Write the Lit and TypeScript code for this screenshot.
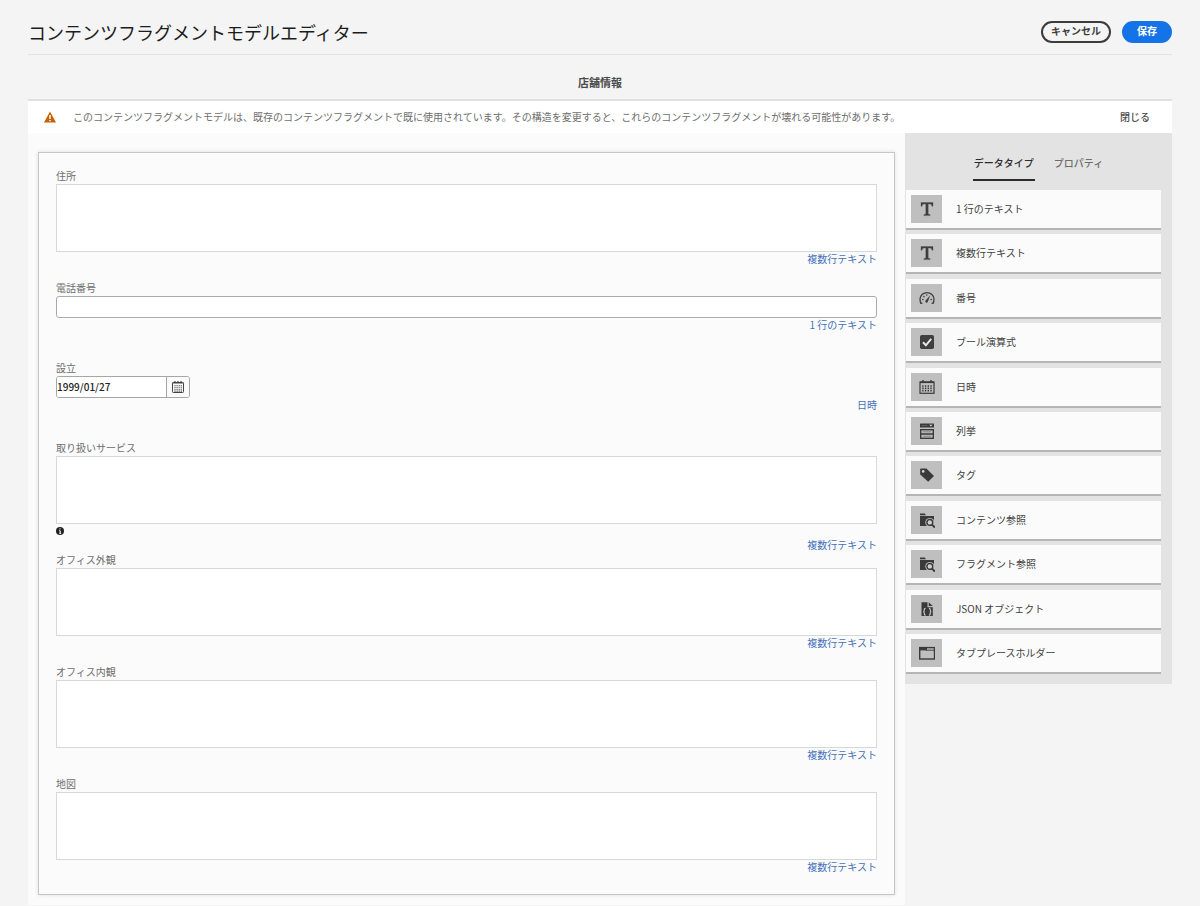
import { LitElement, html, css, svg, nothing } from "lit";
import { customElement, property, state } from "lit/decorators.js";
import { classMap } from "lit/directives/class-map.js";

const folderSearch = svg`
  <path d="M1 1.600h4.800l1.200 1.600H1zM1 4h14v10H1z" fill="#3a3a3a"/>
  <path d="M11 11l5 5" stroke="#bfbfbf" stroke-width="4"/>
  <circle cx="10.800" cy="10.400" r="4.500" fill="#bfbfbf"/>
  <circle cx="10.800" cy="10.400" r="2.900" fill="#cfcfcf" stroke="#3a3a3a" stroke-width="1.400"/>
  <path d="M13 12.600l2.900 2.900" stroke="#3a3a3a" stroke-width="2"/>`;

const letterT = svg`
  <path d="M2 1.500h12v3.700h-1.100c-.1-1.500-.7-2.200-2-2.200H9.200v9.300c0 1 .5 1.200 1.900 1.300v1H4.900v-1c1.400-.1 1.900-.3 1.900-1.300V3H5.100c-1.300 0-1.900.7-2 2.200H2z" fill="#3f3f3f" stroke="#3f3f3f" stroke-width=".3"/>`;

const ICONS: Record<string, unknown> = {
  text: letterT,
  gauge: svg`
    <path d="M2.300 13.600a7 7 0 1 1 11.400 0" fill="none" stroke="#3f3f3f" stroke-width="1.300"/>
    <path d="M1.200 13.300h2.300M12.500 13.300h2.300" stroke="#3f3f3f" stroke-width="1"/>
    <path d="M11.300 5.300L8.900 11.600a1.300 1.300 0 1 1-2.100-1.300z" fill="#3f3f3f"/>
    <g fill="#3f3f3f"><circle cx="3.800" cy="9.500" r=".8"/><circle cx="4.900" cy="6.600" r=".8"/><circle cx="7.800" cy="5" r=".8"/><circle cx="12.200" cy="9.500" r=".8"/></g>`,
  check: svg`
    <rect x="1" y="1" width="14" height="14" rx="1.800" fill="#3f3f3f"/>
    <path d="M4 8.300l2.900 3L12.200 4.900" fill="none" stroke="#e6e6e6" stroke-width="2"/>`,
  calendar: svg`
    <rect x="1" y="3" width="14" height="11.300" fill="none" stroke="#3a3a3a" stroke-width="1.200"/>
    <path d="M1 3.300h14" stroke="#3a3a3a" stroke-width="1.600"/>
    <path d="M4 1v3M12 1v3" stroke="#3a3a3a" stroke-width="1.400"/>
    <path d="M3.900 6.200v6.200M6.600 6.200v6.200M9.300 6.200v6.200M12 6.200v6.200" stroke="#3a3a3a" stroke-width="1.400" stroke-dasharray="1.600 .7"/>`,
  list: svg`
    <rect x="1" y="0.600" width="14" height="4" rx=".4" fill="#3a3a3a"/>
    <path d="M10.200 1.800h3.400l-1.700 1.700z" fill="#d8d8d8"/>
    <path d="M2.500 2.600h6" stroke="#6b6b6b" stroke-width=".8"/>
    <rect x="1.700" y="6.700" width="12.600" height="8.600" fill="none" stroke="#3a3a3a" stroke-width="1.400"/>
    <path d="M1.600 11h12.800" stroke="#3a3a3a" stroke-width="1.500"/>
    <path d="M4 8.800h8M4 13.200h8" stroke="#777" stroke-width=".8"/>`,
  tag: svg`
    <path d="M1.600 1.600h5.800l7.600 7.400-5.800 5.800L1.200 7.600V2z" fill="#3a3a3a"/>
    <circle cx="4.200" cy="4.400" r="1.300" fill="#d4d4d4"/>`,
  folder: folderSearch,
  json: svg`
    <path d="M2.500 1.200h6v5h5.300v8.800H2.500z" fill="#3a3a3a"/>
    <path d="M9.700 1.200l4.100 3.900H9.700z" fill="#3a3a3a"/>
    <path d="M6.600 7.200c-1.500 0-1.300.9-1.300 1.800s-.2 1.500-1 1.600c.8.100 1 .8 1 1.700s-.2 1.800 1.300 1.800M9.900 7.200c1.500 0 1.300.9 1.300 1.800s.2 1.500 1 1.600c-.8.100-1 .8-1 1.700s.2 1.800-1.300 1.800" fill="none" stroke="#d0d0d0" stroke-width="1.100"/>`,
  window: svg`
    <rect x="0.700" y="2.600" width="14.800" height="11.400" fill="none" stroke="#3a3a3a" stroke-width="1.400"/>
    <path d="M.2 2.200h7.800v3.200H.2z" fill="#3a3a3a"/>
    <path d="M7 5.200h8.500" stroke="#3a3a3a" stroke-width=".9"/>`,
};

interface Field {
  id: string;
  label: string;
  kind: "multi" | "single" | "date";
  type: string;
  info?: boolean;
}

const FIELDS: Field[] = [
  { id: "address", label: "住所", kind: "multi", type: "複数行テキスト" },
  { id: "phone", label: "電話番号", kind: "single", type: "1 行のテキスト" },
  { id: "founded", label: "設立", kind: "date", type: "日時" },
  { id: "services", label: "取り扱いサービス", kind: "multi", type: "複数行テキスト", info: true },
  { id: "exterior", label: "オフィス外観", kind: "multi", type: "複数行テキスト" },
  { id: "interior", label: "オフィス内観", kind: "multi", type: "複数行テキスト" },
  { id: "map", label: "地図", kind: "multi", type: "複数行テキスト" },
];

const DATA_TYPES: { icon: string; label: string }[] = [
  { icon: "text", label: "1 行のテキスト" },
  { icon: "text", label: "複数行テキスト" },
  { icon: "gauge", label: "番号" },
  { icon: "check", label: "ブール演算式" },
  { icon: "calendar", label: "日時" },
  { icon: "list", label: "列挙" },
  { icon: "tag", label: "タグ" },
  { icon: "folder", label: "コンテンツ参照" },
  { icon: "folder", label: "フラグメント参照" },
  { icon: "json", label: "JSON オブジェクト" },
  { icon: "window", label: "タブプレースホルダー" },
];

@customElement("model-field")
class ModelField extends LitElement {
  @property({ attribute: false }) field!: Field;

  static styles = css`
    :host { display: block; }
    * { box-sizing: border-box; }
    .field { display: flex; flex-direction: column; padding-bottom: 14px; }
    .short { padding-bottom: 28px; }
    .with-info { padding-bottom: 0; }
    .label { line-height: 16px; color: #6e6e6e; }
    textarea, input {
      display: block; width: 100%; margin: 0; padding: 0 8px;
      font: inherit; color: #2c2c2c; background: #fff; outline: none;
    }
    textarea { height: 68px; border: 1px solid #d8d8d8; resize: none; }
    .single { height: 22px; border: 1px solid #ababab; border-radius: 3px; }
    .date { display: flex; align-self: flex-start; height: 22px; border: 1px solid #a6a6a6; border-radius: 3px; background: #fff; overflow: hidden; }
    .date input { width: 109px; padding: 0; border: 0; font-weight: 500; color: #222; }
    .date button { display: grid; place-items: center; width: 23px; padding: 0; border: 0; border-left: 1px solid #a6a6a6; background: #fafafa; }
    .date svg { width: 14px; height: 14px; }
    .info { display: flex; align-items: center; height: 14px; }
    .info svg { width: 8px; height: 8px; }
    .type { line-height: 14px; text-align: right; color: #4470b8; }
  `;

  private control() {
    const f = this.field;
    if (f.kind === "multi") return html`<textarea id=${f.id}></textarea>`;
    if (f.kind === "single") return html`<input class="single" id=${f.id} type="text" />`;
    return html`<div class="date">
      <input id=${f.id} type="text" value="1999/01/27" />
      <button type="button" aria-label="カレンダー">
        <svg viewBox="0 0 14 14">
          <rect x="1.500" y="2.500" width="11" height="10" rx=".8" fill="none" stroke="#444" />
          <path d="M1.500 3h11M4 1v2.500M7 1v2.500M10 1v2.500" stroke="#444" stroke-width="1.200" />
          <path d="M3.400 5.700h7.500M3.400 7.700h7.500M3.400 9.700h7.500M3.400 11.300h7.500" stroke="#444" stroke-width="1.100" stroke-dasharray="1.200 .9" />
        </svg>
      </button>
    </div>`;
  }

  render() {
    const f = this.field;
    return html`<div class=${classMap({ field: true, short: f.kind !== "multi", "with-info": !!f.info })}>
      <label class="label" for=${f.id}>${f.label}</label>
      ${this.control()}
      ${f.info
        ? html`<div class="info"><svg viewBox="0 0 8 8"><circle cx="4" cy="4" r="4" fill="#222" /><path d="M4 1.300v1.200M3.200 3.700H4.200v2.600M3.200 6.300h2" stroke="#fff" fill="none" /></svg></div>`
        : nothing}
      <div class="type">${f.type}</div>
    </div>`;
  }
}

@customElement("app-root")
class AppRoot extends LitElement {
  @state() private tab = 0;
  @state() private alertOpen = true;

  static styles = css`
    :host {
      display: block; min-height: 100vh; background: #f4f4f4; color: #4b4b4b;
      font: 10px/16px "Noto Sans CJK JP", sans-serif;
    }
    * { box-sizing: border-box; }
    button { font: inherit; margin: 0; cursor: pointer; }
    .page { padding: 0 28px; }
    .top { display: flex; align-items: center; justify-content: space-between; height: 55px; padding-top: 9px; border-bottom: 1px solid #e4e4e4; }
    h1 { margin: 0; font-size: 18px; line-height: 26px; font-weight: 400; color: #1c1c1c; }
    .actions { display: flex; gap: 11px; }
    .pill { height: 22px; padding: 0 8px 1px; border: 2px solid #3c3c3c; border-radius: 11px; background: transparent; color: #3c3c3c; line-height: 16px; font-weight: 700; }
    .primary { padding: 0 13px 1px; border-color: #1473e6; background: #1473e6; color: #fff; }
    h2 { margin: 0; padding: 19px 0 9px; font-size: 11px; line-height: 16px; font-weight: 700; text-align: center; color: #4b4b4b; }
    .alert { display: flex; align-items: center; height: 34px; padding: 0 22px 0 16px; border-top: 2px solid #e0e0e0; background: #fff; }
    .alert svg { flex: none; width: 12px; height: 12px; }
    .alert p { flex: 1; margin: 0 0 0 17px; color: #6e6e6e; }
    .close { padding: 0; border: 0; background: none; color: #4b4b4b; font-weight: 500; }
    .body { display: grid; grid-template-columns: minmax(0, 1fr) 267px; align-items: start; }
    .canvas { padding: 19px 10px 10px; background: #fbfbfb; }
    .card { padding: 15px 17px 20px; border: 1px solid #c6c6c6; background: #fbfbfb; box-shadow: 0 0 4px rgba(0, 0, 0, 0.12); }
    .card model-field:last-child { margin-bottom: -14px; }
    .side { padding-bottom: 10px; background: #e3e3e3; }
    .tabs { display: flex; justify-content: center; gap: 18px; padding: 14px 0 9px; }
    .tab { height: 34px; padding: 0 1px; border: 0; border-bottom: 2px solid transparent; background: none; color: #6e6e6e; line-height: 32px; font-weight: 500; }
    .tab.active { border-bottom-color: #2c2c2c; color: #2c2c2c; }
    .types { display: flex; flex-direction: column; justify-content: space-between; min-height: 484px; margin: 0; padding: 0 11px 0 1px; list-style: none; }
    .type { display: flex; align-items: center; gap: 14px; width: 100%; height: 40px; padding: 0 5px; border: 0; border-bottom: 2px solid #b5b5b5; background: #fbfbfb; color: #3f3f3f; text-align: left; }
    .tile { display: grid; place-items: center; width: 31px; height: 28px; background: #bfbfbf; }
    .tile svg { width: 16px; height: 16px; }
  `;

  render() {
    return html`<div class="page">
      <header class="top">
        <h1>コンテンツフラグメントモデルエディター</h1>
        <div class="actions">
          <button class="pill" type="button">キャンセル</button>
          <button class="pill primary" type="button">保存</button>
        </div>
      </header>
      <h2>店舗情報</h2>
      ${this.alertOpen
        ? html`<div class="alert" role="alert">
            <svg viewBox="0 0 12 12">
              <path d="M6 .4L12 11.600H0z" fill="#cb6000" stroke-linejoin="round" />
              <path d="M6 4v4M6 8.900v1.400" stroke="#fff" stroke-width="1.500" />
            </svg>
            <p>このコンテンツフラグメントモデルは、既存のコンテンツフラグメントで既に使用されています。その構造を変更すると、これらのコンテンツフラグメントが壊れる可能性があります。</p>
            <button class="close" type="button" @click=${() => (this.alertOpen = false)}>閉じる</button>
          </div>`
        : nothing}
      <div class="body">
        <main class="canvas">
          <form class="card">${FIELDS.map((f) => html`<model-field .field=${f}></model-field>`)}</form>
        </main>
        <aside class="side">
          <div class="tabs" role="tablist">
            ${["データタイプ", "プロパティ"].map(
              (t, i) => html`<button
                type="button"
                role="tab"
                aria-selected=${this.tab === i ? "true" : "false"}
                class=${classMap({ tab: true, active: this.tab === i })}
                @click=${() => (this.tab = i)}
              >${t}</button>`
            )}
          </div>
          <ul class="types">
            ${DATA_TYPES.map(
              (d) => html`<li>
                <button class="type" type="button">
                  <span class="tile"><svg viewBox="0 0 16 16">${ICONS[d.icon]}</svg></span>
                  <span>${d.label}</span>
                </button>
              </li>`
            )}
          </ul>
        </aside>
      </div>
    </div>`;
  }
}
